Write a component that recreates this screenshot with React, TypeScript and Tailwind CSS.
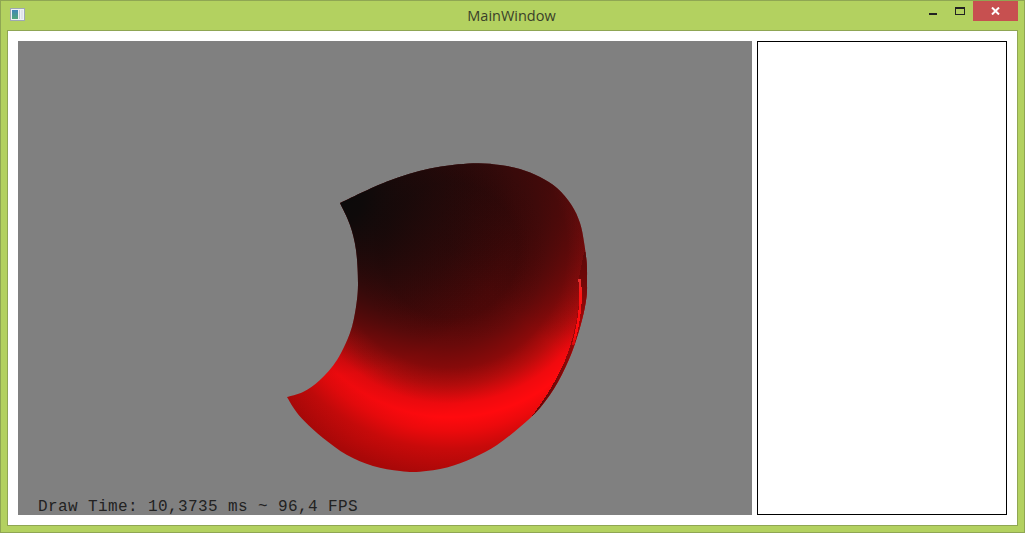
function AppIcon() {
  return (
    <svg width="16" height="14" viewBox="0 0 16 14" className="shrink-0">
      <rect x="0.5" y="0.5" width="14" height="12" fill="#eef1f6" stroke="#9ea8b4" />
      <defs>
        <linearGradient id="ico" x1="0" y1="0" x2="0" y2="1">
          <stop offset="0" stopColor="#3f86b8" />
          <stop offset="1" stopColor="#4fa77a" />
        </linearGradient>
      </defs>
      <rect x="2" y="2" width="6" height="9" fill="url(#ico)" />
      <rect x="9" y="2" width="1" height="9" fill="#c4ccd6" />
      <rect x="11" y="2" width="2" height="9" fill="#dfe4ea" />
    </svg>
  );
}

/* ── The rendered surface, in page coordinates ──────────── */

type Pt = [number, number];

const OUTER: Pt[] = [
  [340, 203], [387, 181.5], [430, 168.5], [473, 163.3], [500, 165], [520, 169], [540, 177],
  [557, 188], [571.5, 205], [580, 223], [584, 242], [586.7, 263], [587, 280], [586.5, 297],
  [582, 320], [572, 352], [558, 382], [540, 408], [520, 427], [497, 445], [473, 458],
  [447, 467.5], [420, 471.7], [400, 471], [373, 466], [347, 455], [323, 438], [305, 421.7],
  [295, 410], [287, 397],
];
const INNER: Pt[] = [
  [287, 397], [303, 392], [320, 380], [337, 360], [350, 333], [356, 307], [358, 283],
  [356, 250], [350, 225], [340, 203],
];

// catmull-rom through the traced points
function spline(pts: Pt[]): string {
  let d = "";
  for (let i = 0; i < pts.length - 1; i++) {
    const p0 = pts[Math.max(i - 1, 0)];
    const p1 = pts[i];
    const p2 = pts[i + 1];
    const p3 = pts[Math.min(i + 2, pts.length - 1)];
    const c1x = p1[0] + (p2[0] - p0[0]) / 6;
    const c1y = p1[1] + (p2[1] - p0[1]) / 6;
    const c2x = p2[0] - (p3[0] - p1[0]) / 6;
    const c2y = p2[1] - (p3[1] - p1[1]) / 6;
    d += ` C${c1x} ${c1y} ${c2x} ${c2y} ${p2[0]} ${p2[1]}`;
  }
  return d;
}

const OUTLINE = `M340 203${spline(OUTER)}${spline(INNER)} Z`;

function Surface() {
  return (
    <svg
      width="734"
      height="474"
      viewBox="18 41 734 474"
      className="block"
      shapeRendering="crispEdges"
    >
      <defs>
        <clipPath id="body">
          <path d={OUTLINE} />
        </clipPath>
        <radialGradient id="lit" gradientUnits="userSpaceOnUse" cx="450" cy="250" r="226">
          <stop offset="0" stopColor="#4a0808" />
          <stop offset="0.3" stopColor="#560808" />
          <stop offset="0.42" stopColor="#700a0a" />
          <stop offset="0.52" stopColor="#8c0a0a" />
          <stop offset="0.6" stopColor="#b80c0c" />
          <stop offset="0.68" stopColor="#f00a0e" />
          <stop offset="0.74" stopColor="#ff0a0e" />
          <stop offset="0.8" stopColor="#ec0a0c" />
          <stop offset="0.88" stopColor="#c80a0a" />
          <stop offset="1" stopColor="#a80808" />
        </radialGradient>
        <linearGradient id="shadeY" gradientUnits="userSpaceOnUse" x1="0" y1="163" x2="0" y2="340">
          <stop offset="0" stopColor="#0a0a0a" stopOpacity="0.35" />
          <stop offset="1" stopColor="#0a0a0a" stopOpacity="0" />
        </linearGradient>
        <linearGradient id="shadeRight" gradientUnits="userSpaceOnUse" x1="590" y1="215" x2="510" y2="310">
          <stop offset="0" stopColor="#0a0a0a" stopOpacity="0.35" />
          <stop offset="1" stopColor="#0a0a0a" stopOpacity="0" />
        </linearGradient>
        <radialGradient id="shadeCorner" gradientUnits="userSpaceOnUse" cx="335" cy="195" r="290">
          <stop offset="0" stopColor="#0a0a0a" stopOpacity="1" />
          <stop offset="0.1" stopColor="#0a0a0a" stopOpacity="0.95" />
          <stop offset="0.25" stopColor="#0a0a0a" stopOpacity="0.7" />
          <stop offset="0.5" stopColor="#0a0a0a" stopOpacity="0.25" />
          <stop offset="0.62" stopColor="#0a0a0a" stopOpacity="0.08" />
          <stop offset="0.85" stopColor="#0a0a0a" stopOpacity="0" />
        </radialGradient>
        <linearGradient id="fold" gradientUnits="userSpaceOnUse" x1="0" y1="250" x2="0" y2="420">
          <stop offset="0" stopColor="#5a0808" />
          <stop offset="0.18" stopColor="#700808" />
          <stop offset="0.41" stopColor="#a00808" />
          <stop offset="0.59" stopColor="#900808" />
          <stop offset="1" stopColor="#5a0808" />
        </linearGradient>
        <linearGradient id="streak" gradientUnits="userSpaceOnUse" x1="0" y1="279" x2="0" y2="352">
          <stop offset="0" stopColor="#e03030" />
          <stop offset="0.2" stopColor="#ff1414" />
          <stop offset="0.75" stopColor="#ff0a0e" />
          <stop offset="1" stopColor="#c00a0a" />
        </linearGradient>
      </defs>
      <g clipPath="url(#body)">
        <rect x="280" y="155" width="315" height="325" fill="url(#lit)" />
        <rect x="280" y="155" width="315" height="325" fill="url(#shadeY)" />
        <rect x="280" y="155" width="315" height="325" fill="url(#shadeRight)" />
        <rect x="280" y="155" width="315" height="325" fill="url(#shadeCorner)" />
        {/* fold along the right edge */}
        <path
          d="M584 252 L579 278 C581 300 577 325 569 350 C563 368 552 388 540 405 L532 416 L560 400 L592 300 L592 250 Z"
          fill="url(#fold)"
        />
        <path
          d="M579.5 279 C582 298 580 320 573 345"
          fill="none"
          stroke="url(#streak)"
          strokeWidth="2.5"
        />
      </g>
    </svg>
  );
}

export default function App() {
  return (
    <div className="w-[1025px] h-[533px] flex flex-col border border-[#8fa653] bg-[#b3d160] overflow-hidden">
      {/* title bar */}
      <div className="h-[29px] shrink-0 flex items-start relative">
        <div className="ml-[9px] mt-[7px]">
          <AppIcon />
        </div>
        <span
          className="absolute left-0 right-0 top-[6px] -ml-[2px] text-center text-[14.5px] leading-[18px] text-[#3a3f2a]"
          style={{ fontFamily: '"Open Sans", sans-serif' }}
        >
          MainWindow
        </span>
        <div className="ml-auto mr-[6px] flex items-start">
          <div className="w-[8px] h-[2px] bg-[#222] mt-[12px] mr-[18px]" />
          <div className="w-[10px] h-[8px] border border-t-2 border-[#222] mt-[6px] mr-[8px]" />
          <div className="w-[45px] h-[20px] bg-[#c75050] flex items-center justify-center">
            <svg width="9" height="8" viewBox="0 0 9 8">
              <path d="M1 0.5 L8 7.5 M8 0.5 L1 7.5" stroke="#fff" strokeWidth="2" fill="none" />
            </svg>
          </div>
        </div>
      </div>

      {/* client area */}
      <div className="ml-[6px] mr-[6px] h-[496px] shrink-0 border border-[#8fa653] bg-white p-[10px] flex gap-[5px]">
        <div className="relative w-[734px] h-[474px] bg-[#808080] shrink-0">
          <Surface />
          <span
            className="absolute left-[20px] bottom-[-1px] text-[16px] leading-[18px] tracking-[0.4px] whitespace-pre text-[#222222]"
            style={{ fontFamily: '"Liberation Mono", monospace' }}
          >
            Draw Time: 10,3735 ms ~ 96,4 FPS
          </span>
        </div>
        <div className="w-[250px] h-[474px] border border-black bg-white shrink-0" />
      </div>
    </div>
  );
}
